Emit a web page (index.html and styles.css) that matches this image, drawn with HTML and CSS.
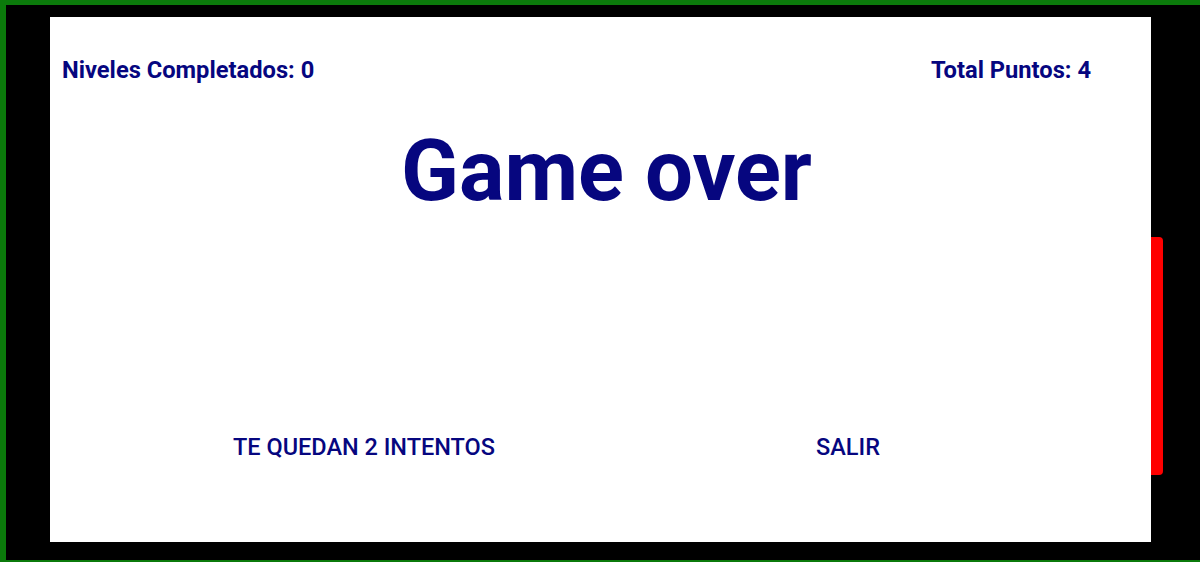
FILE: index.html
```html
<!DOCTYPE html>
<html lang="es">
<head>
<meta charset="utf-8">
<link rel="stylesheet" href="styles.css">
</head>
<body>
<div class="frame">
  <div class="panel">
    <div class="stats">
      <span class="stat">Niveles Completados: 0</span>
      <span class="stat">Total Puntos: 4</span>
    </div>
    <h1 class="title">Game over</h1>
    <div class="actions">
      <button class="btn btn-retry">TE QUEDAN 2 INTENTOS</button>
      <button class="btn btn-exit">SALIR</button>
    </div>
  </div>
  <div class="sidebar"><div class="redbar"></div></div>
</div>
</body>
</html>
```
FILE: styles.css
```css
html, body {
  margin: 0;
  padding: 0;
  background: #000;
  width: 1200px;
  height: 562px;
  overflow: hidden;
  font-family: Roboto, "Liberation Sans", sans-serif;
}
.frame {
  box-sizing: border-box;
  width: 1200px;
  height: 562px;
  border-top: 5px solid #0b7a0b;
  border-left: 6px solid #0b7a0b;
  border-bottom: 2px solid #0b7a0b;
  display: flex;
  align-items: flex-start;
  padding: 12px 0 0 44px;
}
.panel {
  width: 1101px;
  height: 525px;
  background: #fff;
  display: flex;
  flex-direction: column;
  color: #06067f;
}
.stats {
  display: flex;
  justify-content: space-between;
  padding: 39px 60px 0 12px;
}
.stat {
  font-size: 23.7px;
  font-weight: 700;
}
.title {
  margin: 41px 0 0 0;
  text-align: center;
  font-size: 85px;
  font-weight: 700;
  line-height: 1.1;
  padding-left: 12px;
}
.actions {
  display: flex;
  margin-top: 214px;
  padding-left: 183px;
}
.btn {
  background: none;
  border: none;
  padding: 0;
  font-family: Roboto, "Liberation Sans", sans-serif;
  font-size: 23.5px;
  font-weight: 500;
  color: #06067f;
}
.btn-exit {
  margin-left: 321px;
}
.sidebar {
  padding-top: 220px;
}
.redbar {
  width: 12px;
  height: 238px;
  background: #ff0000;
  border-radius: 0 4px 4px 0;
}
```
